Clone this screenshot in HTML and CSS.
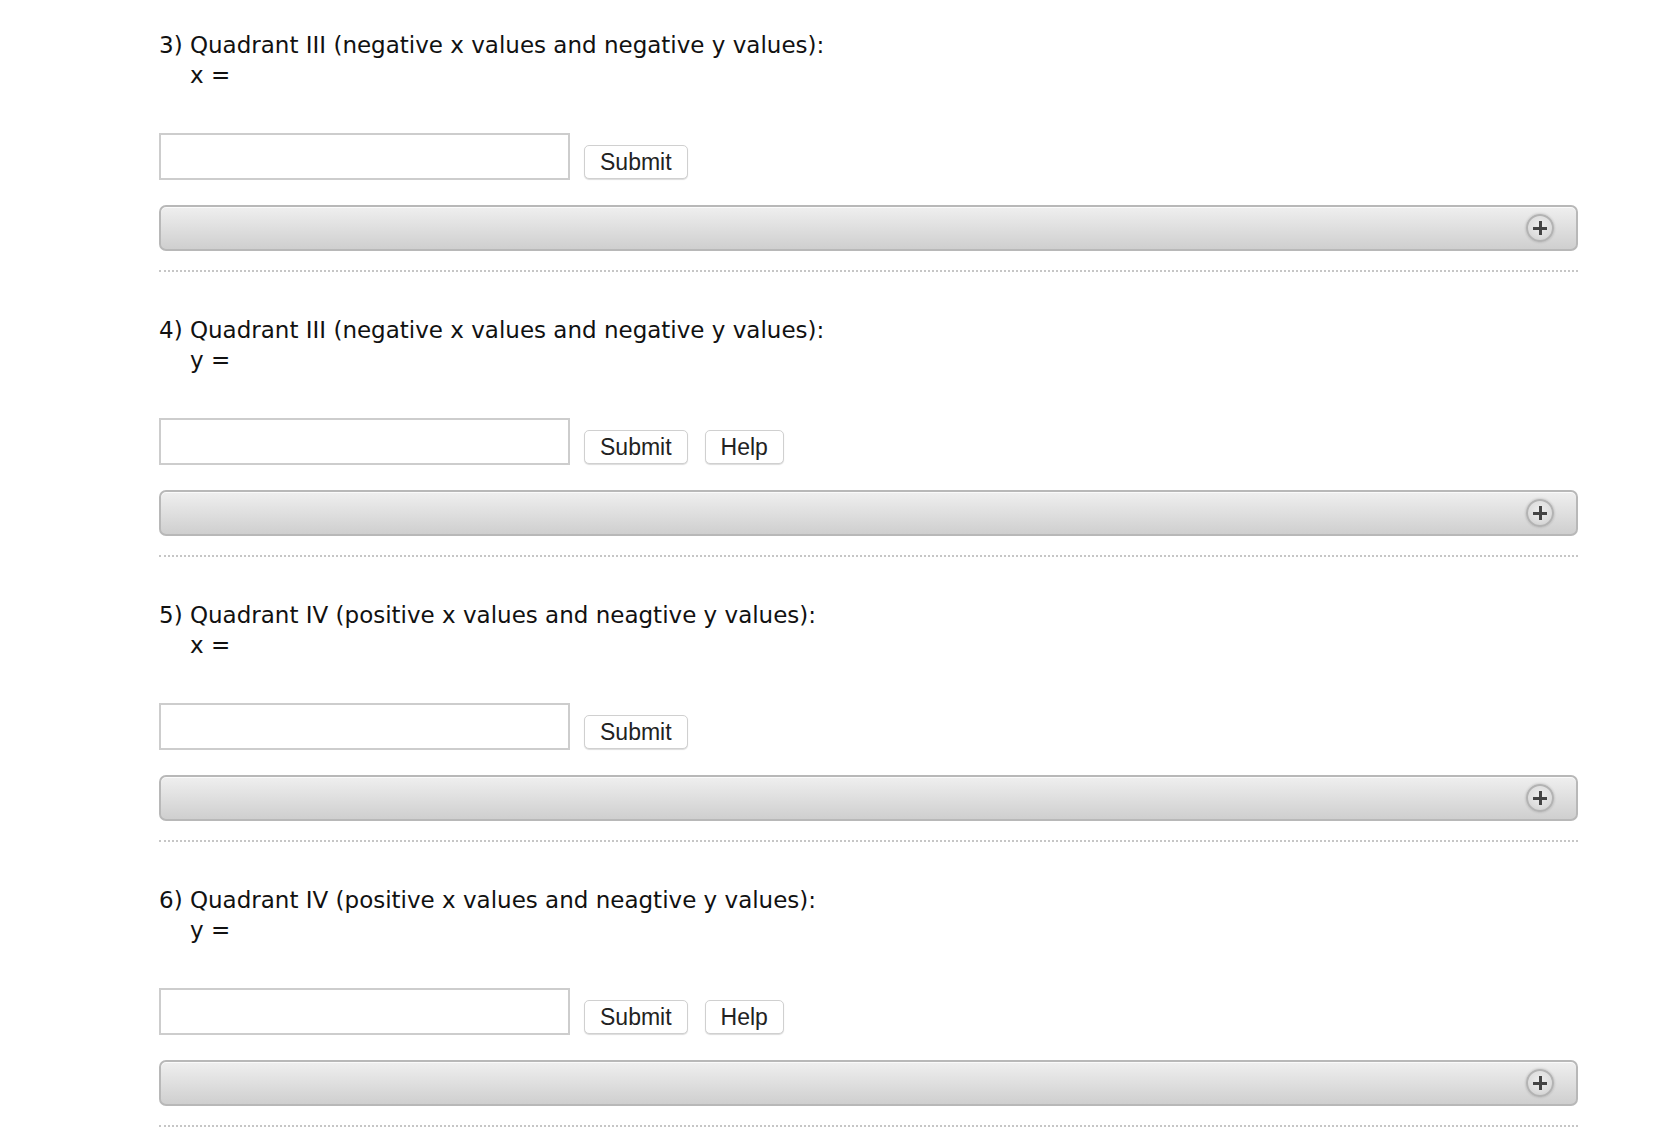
FILE: index.html
```html
<!DOCTYPE html>
<html>
<head>
    <title>Quadrants</title>
    <link rel="stylesheet" href="styles.css">
</head>
<body>
    <div id="Questions">

        <div class="part">
            <div class="prompt">3) Quadrant III (negative x values and negative y values):</div>
            <div class="label">x =</div>
            <div class="answer">
                <input type="text" class="entry" />
                <button type="button" class="btn">Submit</button>
            </div>
            <div class="bar"><span class="expand"></span></div>
        </div>

        <div class="part">
            <div class="prompt">4) Quadrant III (negative x values and negative y values):</div>
            <div class="label">y =</div>
            <div class="answer">
                <input type="text" class="entry" />
                <button type="button" class="btn">Submit</button>
                <button type="button" class="btn help">Help</button>
            </div>
            <div class="bar"><span class="expand"></span></div>
        </div>

        <div class="part">
            <div class="prompt">5) Quadrant IV (positive x values and neagtive y values):</div>
            <div class="label">x =</div>
            <div class="answer">
                <input type="text" class="entry" />
                <button type="button" class="btn">Submit</button>
            </div>
            <div class="bar"><span class="expand"></span></div>
        </div>

        <div class="part">
            <div class="prompt">6) Quadrant IV (positive x values and neagtive y values):</div>
            <div class="label">y =</div>
            <div class="answer">
                <input type="text" class="entry" />
                <button type="button" class="btn">Submit</button>
                <button type="button" class="btn help">Help</button>
            </div>
            <div class="bar"><span class="expand"></span></div>
        </div>

    </div>
</body>
</html>
```

FILE: styles.css
```css
body { margin: 0; background: #fff; color: #111; font-family: "DejaVu Sans", sans-serif; font-size: 23px; }
#Questions { margin: 30px 96px 0 159px; }
.part { margin-bottom: 43px; padding-bottom: 19px; border-bottom: 2px dotted #c6c6c6; }
.prompt { line-height: 30px; }
.label { line-height: 30px; padding-left: 31px; }
.answer { display: flex; align-items: flex-end; margin-top: 43px; }
.entry { box-sizing: border-box; width: 411px; height: 47px; margin: 0; border: 2px solid #cdcdcd; background: #fff; }
.btn { box-sizing: border-box; height: 34px; margin: 0 0 1px 14px; padding: 0 15px; border: 1px solid #d0d0d0; border-radius: 5px; background: #fff; box-shadow: 0 1px 1px rgba(0,0,0,0.14); font-family: "Liberation Sans", Arial, sans-serif; font-size: 23px; color: #222; }
.btn.help { margin-left: 17px; }
.bar { display: flex; justify-content: flex-end; align-items: center; box-sizing: border-box; height: 46px; margin-top: 25px; padding-right: 22px; border: 2px solid #b8b8b8; border-radius: 7px; background: linear-gradient(#efefef, #cfcfcf); box-shadow: inset 0 1px 0 #fafafa; }
.expand { position: relative; box-sizing: border-box; width: 28px; height: 28px; border: 2px solid #b3b3b3; border-radius: 50%; background: radial-gradient(circle at 50% 40%, #eeeeee 0, #dddddd 60%, #c8c8c8 100%); box-shadow: 0 0 2px 1px rgba(0,0,0,0.1); }
.expand::before, .expand::after { content: ""; position: absolute; left: 50%; top: 50%; background: #444; }
.expand::before { width: 14px; height: 3px; margin: -1.5px 0 0 -7px; }
.expand::after { width: 3px; height: 14px; margin: -7px 0 0 -1.5px; }
```
